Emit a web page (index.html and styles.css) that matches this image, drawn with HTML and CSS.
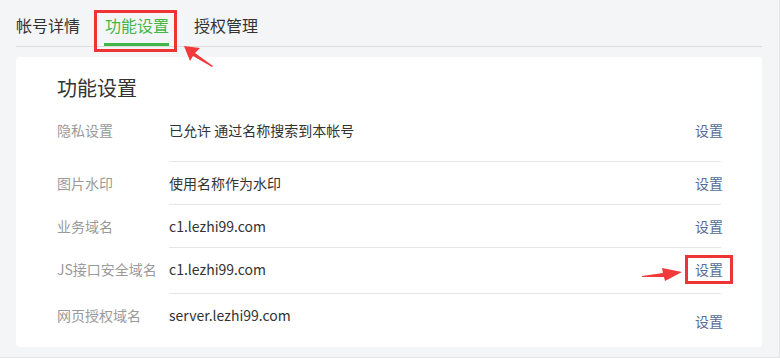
FILE: index.html
```html
<!DOCTYPE html>
<html lang="zh-CN">
<head>
<meta charset="utf-8">
<title>功能设置</title>
<link rel="stylesheet" href="styles.css">
</head>
<body>
<div class="page">
  <nav class="tabs">
    <a class="tab">帐号详情</a>
    <a class="tab active">功能设置<span class="mark mark-tab"></span></a>
    <a class="tab">授权管理</a>
  </nav>
  <section class="card">
    <h2 class="title">功能设置</h2>
    <div class="row row-first">
      <div class="label">隐私设置</div>
      <div class="content"><span class="value">已允许 通过名称搜索到本帐号</span><a class="action">设置</a></div>
    </div>
    <div class="row">
      <div class="label">图片水印</div>
      <div class="content"><span class="value">使用名称作为水印</span><a class="action">设置</a></div>
    </div>
    <div class="row">
      <div class="label">业务域名</div>
      <div class="content"><span class="value">c1.lezhi99.com</span><a class="action">设置</a></div>
    </div>
    <div class="row row-tall">
      <div class="label">JS接口安全域名</div>
      <div class="content"><span class="value">c1.lezhi99.com</span><a class="action boxed">设置<span class="mark mark-action"></span></a></div>
    </div>
    <div class="row row-last">
      <div class="label">网页授权域名</div>
      <div class="content"><span class="value">server.lezhi99.com</span><a class="action action-low">设置</a></div>
    </div>
  </section>
  <svg class="arrow arrow-tab" width="40" height="30" viewBox="0 0 40 30">
    <polygon points="3,2 19,4 14,9 32,22 31,23 12,12 9,17" fill="#f23a3a"/>
  </svg>
  <svg class="arrow arrow-row" width="46" height="20" viewBox="0 0 46 20">
    <polygon points="1,9 22,6 21,1 41,5 24,14 23,10 1,10" fill="#f23a3a"/>
  </svg>
</div>
</body>
</html>
```
FILE: styles.css
```css
* { box-sizing: border-box; }
html, body { margin: 0; padding: 0; }
body {
  background: #f4f5f7;
  font-family: "Noto Sans CJK SC", "Noto Sans", sans-serif;
  color: #333;
}
.page {
  position: relative;
  width: 780px;
  height: 358px;
  padding: 0 17px 0 16px;
  border-right: 1px solid #e3e4e6;
  border-bottom: 1px solid #e3e4e6;
  overflow: hidden;
}
.tabs {
  display: flex;
  gap: 25px;
  height: 47px;
  border-bottom: 1px solid #dcdde0;
}
.tab {
  position: relative;
  font-size: 16px;
  line-height: 22px;
  padding-top: 14px;
  color: #333;
  height: 46px;
}
.tab.active {
  color: #44b549;
  border-bottom: 3px solid #44b549;
  margin-left: -1px;
  padding-left: 1px;
}
.mark {
  position: absolute;
  border: 3px solid #ee3434;
}
.mark-tab {
  left: -10px;
  top: 10px;
  width: 83px;
  height: 42px;
}
.card {
  margin-top: 10px;
  background: #fff;
  border-radius: 4px;
  height: 290px;
  padding: 16px 41px 0 41px;
}
.title {
  margin: 0 0 6px;
  font-size: 20px;
  font-weight: normal;
  line-height: 29px;
  color: #333;
}
.row {
  display: flex;
  font-size: 14px;
  line-height: 20px;
}
.label {
  width: 112px;
  flex: none;
  color: #9a9a9a;
  padding-top: 11px;
}
.content {
  flex: 1;
  display: flex;
  justify-content: space-between;
  align-items: flex-start;
  padding: 11px 0 11px;
  border-bottom: 1px solid #e4e6e9;
}
.row-first .label, .row-first .content { padding-top: 12px; }
.row-first .content { padding-bottom: 21px; }
.row-tall .content { padding-bottom: 14px; }
.row-last .content { border-bottom: none; }
.value { color: #333; }
.action {
  position: relative;
  color: #576b95;
  margin-right: -2px;
}
.action-low { margin-top: 6px; }
.mark-action {
  left: -10px;
  top: -4px;
  width: 48px;
  height: 29px;
}
.arrow { position: absolute; }
.arrow-tab { left: 181px; top: 44px; }
.arrow-row { left: 641px; top: 267px; }
```
